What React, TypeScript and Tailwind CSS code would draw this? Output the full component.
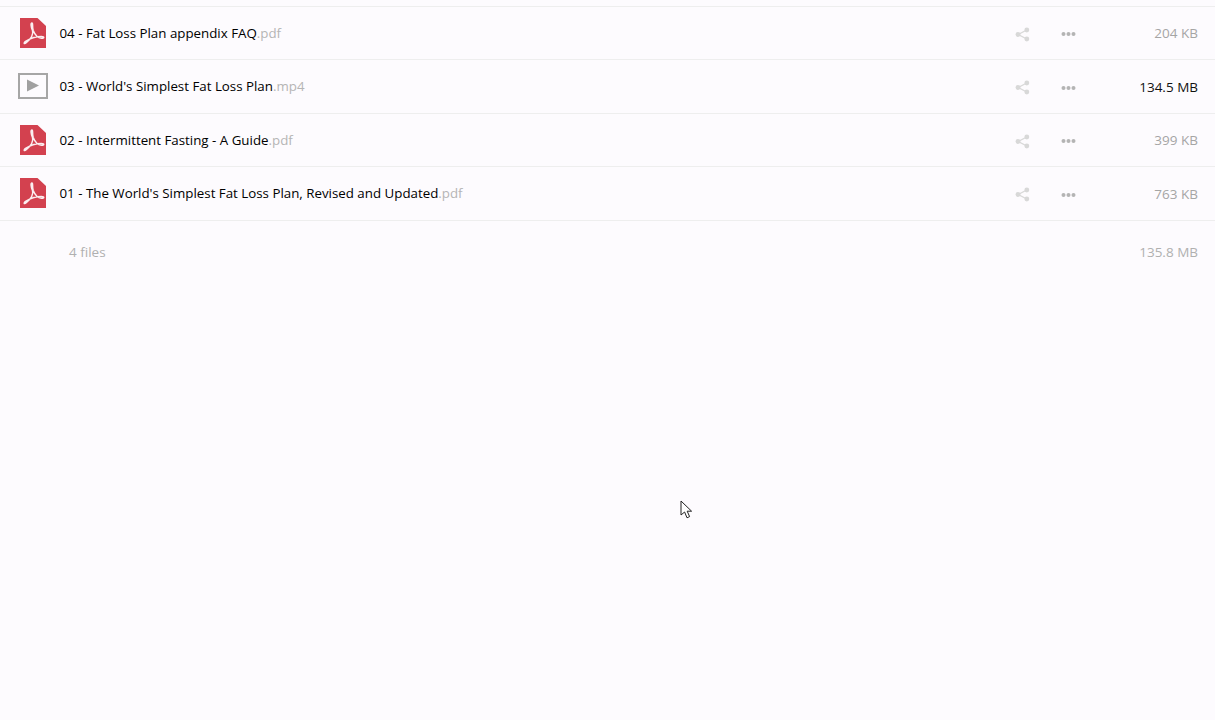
import React from "react";

function PdfIcon() {
  return (
    <svg width="26" height="30" viewBox="0 0 26 30" className="block">
      <path d="M0 0H17.5L26 8V30H0Z" fill="#d3414f" />
      <path d="M12 5C10.6 5 10.8 8.5 12.5 12.5C13.8 16 11 21 6.5 24.5C4.2 26.4 3.2 25.3 5.5 23.4C9.5 20.6 16 18.4 21.5 18.4C24.5 18.4 24.5 20.4 21.5 20.2C18 20 14.8 16.5 13.2 12.5C12 9 13.2 5 12 5Z" fill="none" stroke="#fbeef0" strokeWidth="1.5" strokeLinejoin="round" />
    </svg>
  );
}

function VideoIcon() {
  return (
    <svg width="30" height="26" viewBox="0 0 30 26" className="block">
      <rect x="1" y="1" width="28" height="24" fill="#fdfbfe" stroke="#a6a6a6" strokeWidth="2" />
      <path d="M9 6.5L21 12.5L9 18.5Z" fill="#a0a0a0" />
    </svg>
  );
}

function ShareIcon() {
  return (
    <svg width="15" height="15" viewBox="0 0 16 16" className="block">
      <path d="M12.5 3.2L3.5 8L12.5 12.8" fill="none" stroke="#d8d8d8" strokeWidth="1.4" />
      <circle cx="12.6" cy="3.2" r="2.6" fill="#d8d8d8" />
      <circle cx="3.2" cy="8" r="2.6" fill="#d8d8d8" />
      <circle cx="12.6" cy="12.8" r="2.6" fill="#d8d8d8" />
    </svg>
  );
}

function MoreIcon() {
  return (
    <svg width="15" height="6" viewBox="0 0 15 6" className="block">
      <circle cx="2.5" cy="3" r="2" fill="#b4b4b4" />
      <circle cx="7.5" cy="3" r="2" fill="#b4b4b4" />
      <circle cx="12.5" cy="3" r="2" fill="#b4b4b4" />
    </svg>
  );
}

const rows = [
  { name: "04 - Fat Loss Plan appendix FAQ", ext: ".pdf", size: "204 KB", dark: false, video: false },
  { name: "03 - World's Simplest Fat Loss Plan", ext: ".mp4", size: "134.5 MB", dark: true, video: true },
  { name: "02 - Intermittent Fasting - A Guide", ext: ".pdf", size: "399 KB", dark: false, video: false },
  { name: "01 - The World's Simplest Fat Loss Plan, Revised and Updated", ext: ".pdf", size: "763 KB", dark: false, video: false },
];

export default function App() {
  return (
    <div className="relative h-[720px] w-[1215px] overflow-hidden bg-[#fdfbfe] pt-[5.5px] text-[13.5px] font-['Open_Sans',sans-serif]">
      <div className="border-t border-[#eeeeee]">
        {rows.map((r) => (
          <div key={r.name} className="flex h-[53.5px] items-center border-b border-[#eeeeee]">
            <div className="flex w-[59.5px] shrink-0 justify-center pl-[7px]">
              {r.video ? <VideoIcon /> : <PdfIcon />}
            </div>
            <div className="min-w-0 flex-1 whitespace-nowrap pt-[2px] text-[13.32px] text-black">
              {r.name}
              <span className="text-[#b5b5b5]">{r.ext}</span>
            </div>
            <div className="flex w-[15px] justify-center pt-[3px]"><ShareIcon /></div>
            <div className="ml-[31px] flex w-[15px] justify-center pt-[3px]"><MoreIcon /></div>
            <div className={`w-[139px] pr-[17px] pt-[1px] text-right ${r.dark ? "text-[#111111]" : "text-[#a5a5a5]"}`}>
              {r.size}
            </div>
          </div>
        ))}
      </div>
      <div className="flex h-[62px] items-center justify-between pl-[69px] pr-[17px] pt-[2px] text-[#b0b0b0]">
        <span>4 files</span>
        <span>135.8 MB</span>
      </div>
      <svg width="14" height="20" viewBox="0 0 14 20" className="absolute left-[680px] top-[500px]">
        <path d="M1 1V15L4.6 12L7 17.8L9.6 16.6L7.2 11.2H11.6Z" fill="#fff" stroke="#222" strokeWidth="1" strokeLinejoin="miter" />
      </svg>
    </div>
  );
}
